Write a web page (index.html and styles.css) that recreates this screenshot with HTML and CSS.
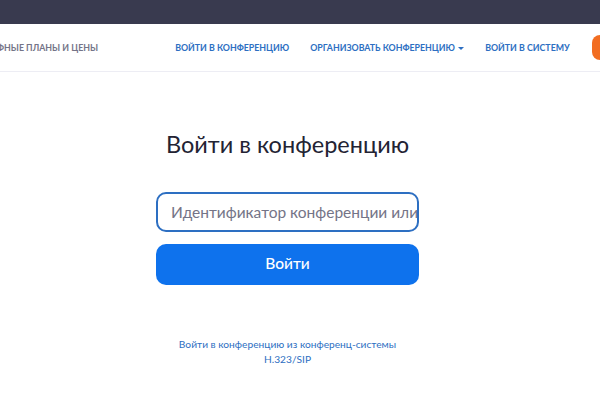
FILE: index.html
```html
<!DOCTYPE html>
<html lang="ru">
<head>
<meta charset="utf-8">
<link rel="stylesheet" href="styles.css">
</head>
<body>
<div class="topbar"></div>
<header class="nav">
  <a class="nav-item muted">Тарифные планы и цены</a>
  <a class="nav-item link first">Войти в конференцию</a>
  <a class="nav-item link">Организовать конференцию <span class="caret"></span></a>
  <a class="nav-item link">Войти в систему</a>
  <a class="signup">Зарегистрироваться</a>
</header>
<main class="main">
  <h1 class="title">Войти в конференцию</h1>
  <div class="field"><span class="placeholder">Идентификатор конференции или имя персональной ссылки</span></div>
  <button class="join">Войти</button>
  <p class="sip">Войти в конференцию из конференц-системы<br>H.323/SIP</p>
</main>
</body>
</html>
```
FILE: styles.css
```css
* { box-sizing: border-box; }
html, body { margin: 0; padding: 0; }
body {
  width: 600px;
  height: 400px;
  overflow: hidden;
  background: #fff;
  font-family: Lato, "Noto Sans", sans-serif;
}
.topbar {
  height: 24px;
  background: #393a4f;
}
.nav {
  height: 48px;
  border-bottom: 1px solid #ededf4;
  display: flex;
  align-items: center;
  white-space: nowrap;
  margin-left: -26px;
}
.nav-item {
  font-size: 8.8px;
  font-weight: 700;
  text-transform: uppercase;
  letter-spacing: 0;
}
.muted { color: #747487; }
.link { color: #2d6fc2; margin-left: 21px; }
.link.first { margin-left: 77px; }
.caret {
  display: inline-block;
  width: 0; height: 0;
  border-left: 3px solid transparent;
  border-right: 3px solid transparent;
  border-top: 3px solid #2d6fc2;
  vertical-align: middle;
  margin-left: 1px;
}
.signup {
  flex: none;
  margin-left: 22px;
  height: 25px;
  line-height: 25px;
  padding: 0 14px;
  border-radius: 8px;
  background: #f26d21;
  color: #fff;
  font-size: 8.8px;
  font-weight: 700;
  text-transform: uppercase;
}
.main {
  display: flex;
  flex-direction: column;
  align-items: center;
  padding-top: 56px;
  padding-right: 25px;
}
.title {
  margin: 0;
  font-size: 23.5px;
  font-weight: 400;
  color: #232333;
  line-height: 32px;
}
.field {
  margin-top: 32px;
  width: 263px;
  height: 40px;
  border: 2px solid #2d6fc2;
  border-radius: 10px;
  padding: 0 13px;
  display: flex;
  align-items: center;
  overflow: hidden;
  white-space: nowrap;
}
.placeholder {
  font-size: 15.5px;
  color: #747487;
}
.join {
  margin-top: 12px;
  width: 263px;
  height: 41px;
  border: none;
  border-radius: 10px;
  background: #0e72ed;
  color: #fff;
  font-family: Lato, "Noto Sans", sans-serif;
  font-size: 15.5px;
  font-weight: 500;
  padding: 0 0 3px;
}
.sip {
  margin: 52px 0 0;
  font-size: 10.2px;
  line-height: 15px;
  text-align: center;
  color: #2d6fc2;
}
```
